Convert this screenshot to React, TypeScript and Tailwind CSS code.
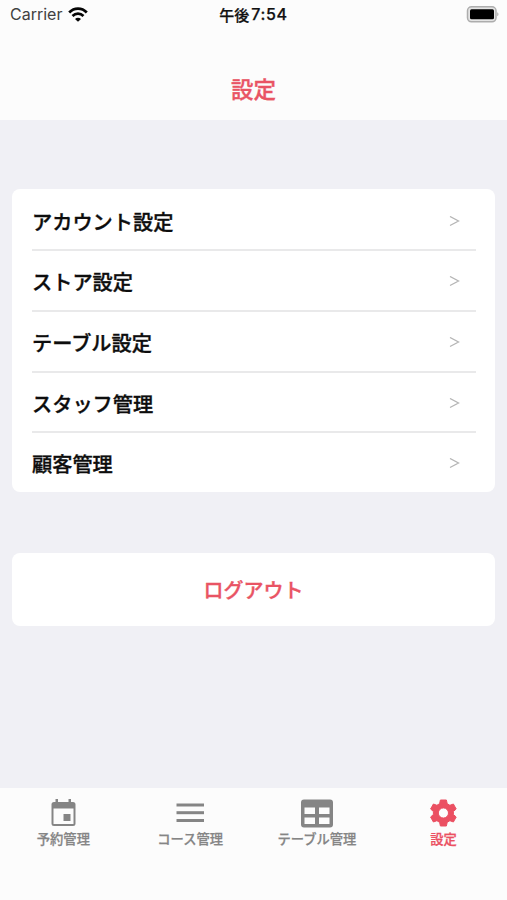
import React, { useState } from 'react';

interface Tab {
  label: string;
  icon: React.ReactNode;
}

const menuItems = ['アカウント設定', 'ストア設定', 'テーブル設定', 'スタッフ管理', '顧客管理'];

const WifiIcon = () => (
  <svg width="20" height="15" viewBox="0 0 20 15" fill="none" stroke="#050505" strokeWidth="2.7">
    <path d="M1.2 5.5C6.2 .3 13.8 .3 18.8 5.5" />
    <path d="M4.5 9C7.7 5.9 12.3 5.9 15.5 9" />
    <path d="M7 12C8.7 10.3 11.3 10.3 13 12L10 14.8Z" fill="#050505" stroke="none" />
  </svg>
);

const BatteryIcon = () => (
  <svg width="33" height="17" viewBox="0 0 33 17">
    <rect x="1.5" y=".8" width="28.5" height="15" rx="4" fill="#e4e4e4" stroke="#adadad" strokeWidth="1.5" />
    <rect x="4" y="3.3" width="24" height="10" rx="1.5" fill="#000" />
    <path d="M31.3 6.3C32.8 6.8 32.8 9.8 31.3 10.3Z" fill="#a5a5a5" />
  </svg>
);

const CalendarIcon = () => (
  <svg width="26" height="28" viewBox="0 0 26 28" fill="currentColor">
    <path
      fillRule="evenodd"
      d="M5.5 0H8V3H18.5V0H21V3H23A2.5 2.5 0 0 1 25.5 5.5V24.5A2.5 2.5 0 0 1 23 27H4A2.5 2.5 0 0 1 1.5 24.5V5.5A2.5 2.5 0 0 1 4 3H5.5ZM3.5 9.5V25H23.5V9.5Z"
    />
    <rect x="13.5" y="15" width="7" height="7" />
  </svg>
);

const ListIcon = () => (
  <svg width="28" height="20" viewBox="0 0 28 20" fill="currentColor">
    <rect x=".5" y=".5" width="27.5" height="3" />
    <rect x=".5" y="8.2" width="27.5" height="3" />
    <rect x=".5" y="16" width="27.5" height="3" />
  </svg>
);

const TableIcon = () => (
  <svg width="34" height="29" viewBox="0 0 34 29" fill="currentColor">
    <path
      fillRule="evenodd"
      d="M4 .5H30A3 3 0 0 1 33 3.5V25.5A3 3 0 0 1 30 28.5H4A3 3 0 0 1 1 25.5V3.5A3 3 0 0 1 4 .5ZM4.5 8.5V15H15V8.5ZM19 8.5V15H29.500V8.5ZM4.5 18.5V25H15V18.5ZM19 18.5V25H29.500V18.5Z"
    />
  </svg>
);

const GearIcon = () => (
  <svg width="28" height="28" viewBox="-13.4 -14 28 28" fill="currentColor" stroke="currentColor" strokeLinejoin="round">
    <path
      fillRule="evenodd"
      d="M-3 -13H3L3.8 -9.3L6.5 -7.7L10 -9L12.8 -4L10 -1.5V1.5L12.8 4L10 9L6.5 7.7L3.8 9.3L3 13H-3L-3.8 9.3L-6.5 7.7L-10 9L-12.8 4L-10 1.5V-1.5L-12.8 -4L-10 -9L-6.5 -7.7L-3.8 -9.3ZM0 -5.1A5.1 5.1 0 1 0 0 5.1A5.1 5.1 0 1 0 0 -5.1Z"
    />
  </svg>
);

const tabs: Tab[] = [
  { label: '予約管理', icon: <CalendarIcon /> },
  { label: 'コース管理', icon: <ListIcon /> },
  { label: 'テーブル管理', icon: <TableIcon /> },
  { label: '設定', icon: <GearIcon /> },
];

const StatusBar = () => (
  <div className="grid h-[29px] grid-cols-3 items-center px-2">
    <div className="flex items-center gap-[6px] pl-[2px]">
      <span className="font-['Inter'] text-[16px] leading-[29px] text-[#414141]">Carrier</span>
      <WifiIcon />
    </div>
    <div className="flex items-center justify-center text-[15px] leading-[29px] font-medium text-[#111] [-webkit-text-stroke:0.25px]">
      <span>午後</span>
      <span className="ml-[2px] font-['Inter'] text-[16px] font-medium tracking-[0.7px]">7:54</span>
    </div>
    <div className="flex justify-end">
      <BatteryIcon />
    </div>
  </div>
);

export default function App() {
  const [activeTab, setActiveTab] = useState('設定');

  return (
    <div className="flex h-[900px] w-[507px] flex-col overflow-hidden bg-[#f0f0f5] font-['Noto_Sans_CJK_JP',sans-serif]">
      <header className="h-[120px] bg-[#fcfcfc]">
        <StatusBar />
        <h1 className="pt-[43px] text-center text-[22.5px] leading-8 font-medium text-[#e95464] [-webkit-text-stroke:0.35px]">
          設定
        </h1>
      </header>

      <main className="flex-1 px-3 pt-[69px]">
        <ul className="h-[303px] rounded-lg bg-white pr-[19px] pl-5">
          {menuItems.map((item) => (
            <li
              key={item}
              className="flex h-[60.7px] items-center justify-between border-t-2 border-[#e9e9ea] pt-[3px] pr-[16px] first:h-[60.3px] first:border-t-0 first:pt-[5px]"
            >
              <span className="text-[20.2px] leading-8 font-medium text-[#0d0d0d] [-webkit-text-stroke:0.35px]">
                {item}
              </span>
              <svg width="11" height="12" viewBox="0 0 11 12" fill="none" stroke="#b5b5b5" strokeWidth="1.3">
                <path d="M1 .5L9.5 5L1 9.5" />
              </svg>
            </li>
          ))}
        </ul>
        <button className="mt-[61px] h-[73px] w-full rounded-lg bg-white text-[20px] font-medium text-[#e95464] [-webkit-text-stroke:0.35px]">
          ログアウト
        </button>
      </main>

      <nav className="grid h-[112px] grid-cols-4 items-start bg-[#fcfcfc] pt-[9px]">
        {tabs.map((tab) => (
          <button
            key={tab.label}
            onClick={() => setActiveTab(tab.label)}
            className={`flex flex-col items-center ${activeTab === tab.label ? 'text-[#eb5062]' : 'text-[#858585]'}`}
          >
            <span className="flex h-[32px] items-center">{tab.icon}</span>
            <span className="text-[13.3px] leading-5 font-medium [-webkit-text-stroke:0.25px]">{tab.label}</span>
          </button>
        ))}
      </nav>
    </div>
  );
}
